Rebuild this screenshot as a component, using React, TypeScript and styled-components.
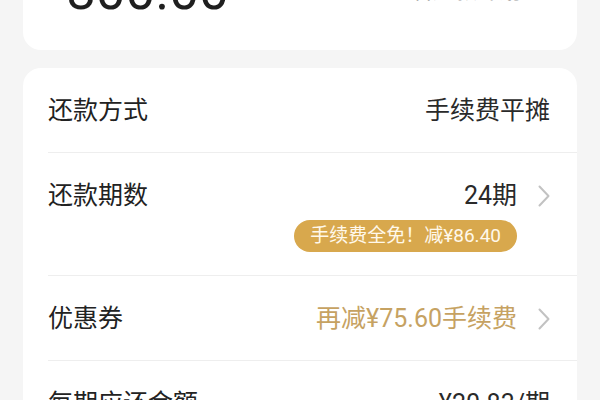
import React from 'react';
import styled, { createGlobalStyle } from 'styled-components';

const GlobalStyle = createGlobalStyle`
  html, body {
    margin: 0;
    padding: 0;
    background: #f5f5f5;
    overflow: hidden;
  }
  body {
    font-family: Roboto, "Noto Sans CJK SC", sans-serif;
  }
`;

const Page = styled.div`
  width: 600px;
  height: 400px;
  box-sizing: border-box;
  padding: 0 23px;
  display: flex;
  flex-direction: column;
  gap: 18px;
  overflow: hidden;
`;

const Card = styled.div`
  background: #ffffff;
  border-radius: 18px;
  flex-shrink: 0;
`;

const SummaryCard = styled(Card)`
  margin-top: -65px;
  padding: 30px 27px 32px 43px;
  display: flex;
  justify-content: space-between;
  align-items: flex-end;
`;

const Amount = styled.div`
  font-family: Roboto, sans-serif;
  font-size: 53px;
  line-height: 1;
  color: #1f1f1f;
`;

const SummaryLink = styled.div`
  display: flex;
  align-items: center;
  gap: 20px;
  margin-bottom: 14px;
  font-size: 22px;
  line-height: 26px;
  color: #9a9a9a;
`;

const DetailCard = styled(Card)`
  padding-left: 25px;
`;

const Row = styled.div<{ $last?: boolean; $tall?: boolean }>`
  display: flex;
  justify-content: space-between;
  align-items: flex-start;
  padding: 30px 27px ${(p) => (p.$tall ? '23px' : '28px')} 0;
  border-bottom: ${(p) => (p.$last ? 'none' : '1px solid #eeeeee')};
`;

const Label = styled.div`
  font-size: 25px;
  line-height: 26px;
  color: #222222;
`;

const RightCol = styled.div`
  display: flex;
  flex-direction: column;
  align-items: flex-end;
`;

const ValueLine = styled.div`
  display: flex;
  align-items: center;
  gap: 21px;
`;

const Value = styled.div<{ $gold?: boolean }>`
  font-size: 25px;
  line-height: 26px;
  color: ${(p) => (p.$gold ? '#c6a262' : '#2a2a2a')};
`;

const Badge = styled.div`
  margin-top: 11px;
  margin-right: 33px;
  height: 32px;
  padding: 0 16px;
  border-radius: 16px;
  background: #d8a84d;
  color: #fff8ea;
  font-size: 19px;
  line-height: 32px;
  white-space: nowrap;
`;

const Chevron = ({ color = '#c2c2c2' }: { color?: string }) => (
  <svg width="12" height="22" viewBox="0 0 12 22" fill="none">
    <path d="M1.5 1.5 L10.5 11 L1.5 20.5" stroke={color} strokeWidth="2" strokeLinecap="round" strokeLinejoin="round" />
  </svg>
);

const SmallChevron = () => (
  <svg width="9" height="16" viewBox="0 0 9 16" fill="none">
    <path d="M1 1 L8 8 L1 15" stroke="#bdbdbd" strokeWidth="1.8" strokeLinecap="round" strokeLinejoin="round" />
  </svg>
);

type Item = {
  label: string;
  value: string;
  gold?: boolean;
  arrow?: boolean;
  badge?: string;
};

const items: Item[] = [
  { label: '还款方式', value: '手续费平摊' },
  { label: '还款期数', value: '24期', arrow: true, badge: '手续费全免！减¥86.40' },
  { label: '优惠券', value: '再减¥75.60手续费', gold: true, arrow: true },
  { label: '每期应还金额', value: '¥20.83/期' },
];

export default function App() {
  return (
    <>
      <GlobalStyle />
      <Page>
        <SummaryCard>
          <Amount>800.00</Amount>
          <SummaryLink>
            <span>查看还款计划</span>
            <SmallChevron />
          </SummaryLink>
        </SummaryCard>

        <DetailCard>
          {items.map((it, i) => (
            <Row key={it.label} $last={i === items.length - 1} $tall={!!it.badge}>
              <Label>{it.label}</Label>
              <RightCol>
                <ValueLine>
                  <Value $gold={it.gold}>{it.value}</Value>
                  {it.arrow && <Chevron />}
                </ValueLine>
                {it.badge && <Badge>{it.badge}</Badge>}
              </RightCol>
            </Row>
          ))}
        </DetailCard>
      </Page>
    </>
  );
}
